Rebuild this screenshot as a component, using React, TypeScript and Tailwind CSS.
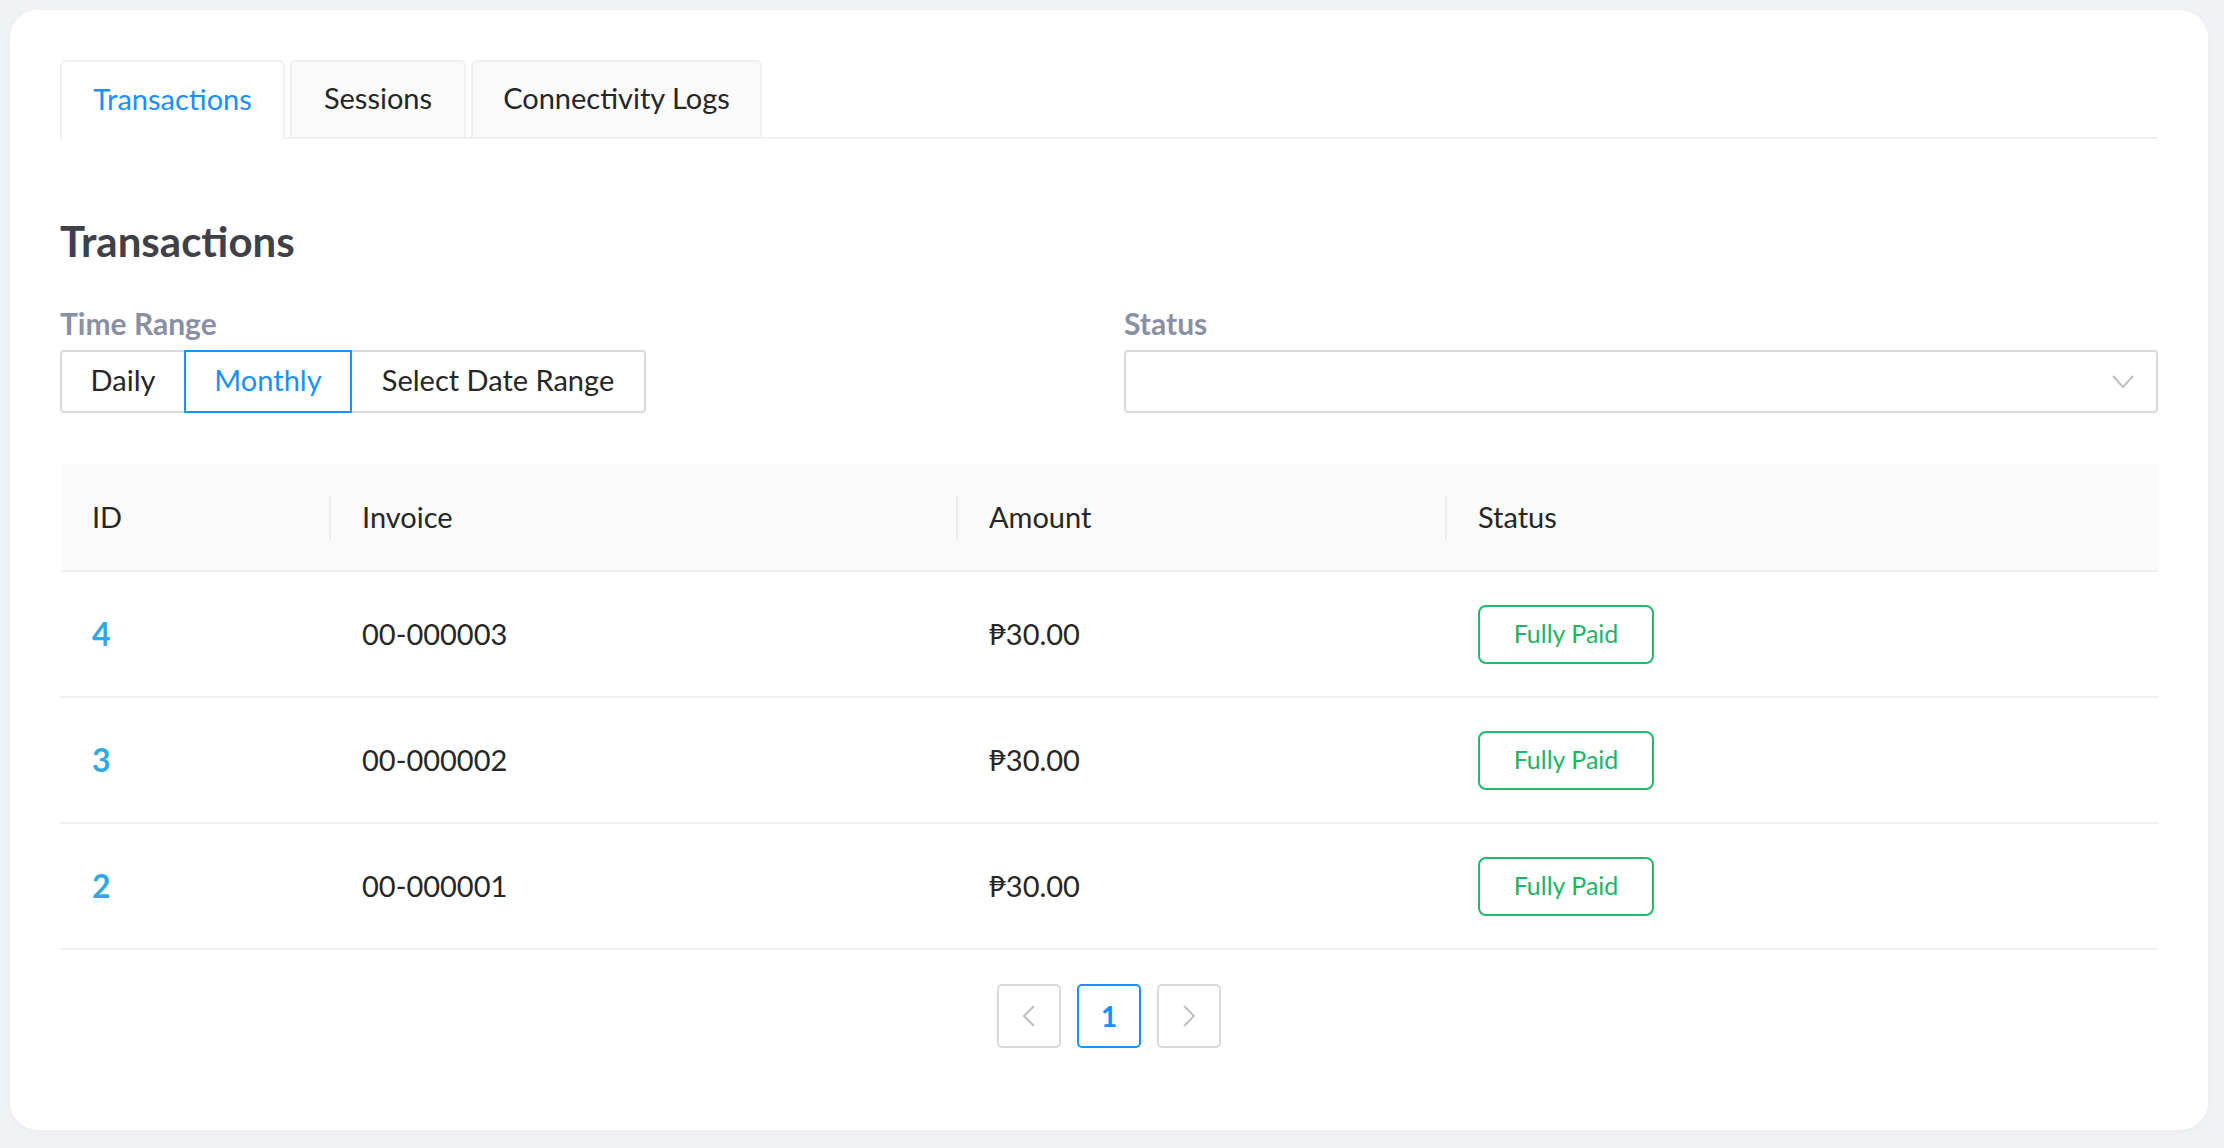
import React, { useState } from "react";

const rows = [
  { id: 4, invoice: "00-000003", amount: "₱30.00" },
  { id: 3, invoice: "00-000002", amount: "₱30.00" },
  { id: 2, invoice: "00-000001", amount: "₱30.00" },
];

const tabs = [
  { name: "Transactions", width: "w-[225px]" },
  { name: "Sessions", width: "w-[176px]" },
  { name: "Connectivity Logs", width: "w-[291px]" },
];

const ranges = [
  { name: "Daily", width: "w-[126px]" },
  { name: "Monthly", width: "w-[168px]" },
  { name: "Select Date Range", width: "w-[296px]" },
];

function HeaderCell({ label, first }: { label: string; first?: boolean }) {
  return (
    <div className="flex items-center h-full">
      {first ? (
        <span className="pl-[32px]">{label}</span>
      ) : (
        <>
          <div className="w-[2px] h-[44px] bg-[#ececec]" />
          <span className="pl-[31px]">{label}</span>
        </>
      )}
    </div>
  );
}

export default function App() {
  const [activeTab, setActiveTab] = useState("Transactions");
  const [range, setRange] = useState("Monthly");

  return (
    <div className="min-h-[1148px] bg-[#f0f2f5] pt-[10px] pl-[10px] font-['Lato','Noto_Sans',sans-serif]">
      <div className="w-[2198px] h-[1120px] bg-white rounded-[28px] shadow-[0_2px_10px_rgba(0,0,0,0.03)] px-[50px] pt-[50px]">
        {/* tabs */}
        <div className="flex items-end gap-[5px] border-b-2 border-[#f0f0f0] h-[79px]">
          {tabs.map((t) => (
            <button
              key={t.name}
              onClick={() => setActiveTab(t.name)}
              className={`${t.width} flex items-center justify-center border-2 border-b-0 border-[#f0f0f0] rounded-t-[6px] text-[29px] pb-[4px] ${
                activeTab === t.name
                  ? "bg-white text-[#1890ff] h-[79px] -mb-[2px]"
                  : "bg-[#fafafa] text-[#262626] h-[77px]"
              }`}
            >
              {t.name}
            </button>
          ))}
        </div>

        <h2 className="mt-[78px] text-[42px] leading-[48px] font-bold text-[#404049]">Transactions</h2>

        {/* filters */}
        <div className="grid grid-cols-2 gap-[30px] mt-[40px]">
          <div>
            <p className="text-[30px] leading-[36px] font-bold text-[#8a90a3]">Time Range</p>
            <div className="flex mt-[9px]">
              {ranges.map((r, i) => (
                <button
                  key={r.name}
                  onClick={() => setRange(r.name)}
                  className={`${r.width} h-[63px] text-[29px] pb-[3px] border-2 flex items-center justify-center ${
                    i === 0 ? "rounded-l-[4px]" : ""
                  } ${i === ranges.length - 1 ? "rounded-r-[4px]" : ""} ${i > 0 ? "-ml-[2px]" : ""} ${
                    range === r.name
                      ? "border-[#1890ff] text-[#1890ff] relative z-10"
                      : "border-[#d9d9d9] text-[#262626]"
                  }`}
                >
                  {r.name}
                </button>
              ))}
            </div>
          </div>
          <div>
            <p className="text-[30px] leading-[36px] font-bold text-[#8a90a3]">Status</p>
            <div className="mt-[9px] h-[63px] border-2 border-[#d9d9d9] rounded-[4px] flex items-center justify-end pr-[22px]">
              <svg width="22" height="14" viewBox="0 0 22 14" fill="none">
                <polyline points="1,1 11,12 21,1" stroke="#bfbfbf" strokeWidth="2" />
              </svg>
            </div>
          </div>
        </div>

        {/* table */}
        <div className="mt-[51px] text-[29px] text-[#262626]">
          <div className="grid grid-cols-[269px_627px_489px_1fr] h-[108px] bg-[#fafafa] border-b-2 border-[#f0f0f0]">
            <HeaderCell label="ID" first />
            <HeaderCell label="Invoice" />
            <HeaderCell label="Amount" />
            <HeaderCell label="Status" />
          </div>
          {rows.map((r) => (
            <div key={r.id} className="grid grid-cols-[269px_627px_489px_1fr] h-[126px] border-b-2 border-[#f0f0f0] items-center">
              <div className="pl-[32px] text-[32px] font-bold text-[#2fa9e1]">{r.id}</div>
              <div className="pl-[33px]">{r.invoice}</div>
              <div className="pl-[33px]">{r.amount}</div>
              <div className="pl-[33px]">
                <span className="inline-flex items-center justify-center w-[176px] h-[59px] border-2 border-[#23b86a] rounded-[8px] text-[25px] text-[#1fb463]">
                  Fully Paid
                </span>
              </div>
            </div>
          ))}
        </div>

        {/* pagination */}
        <div className="flex justify-center gap-[16px] mt-[34px]">
          <button className="w-[64px] h-[64px] border-2 border-[#d9d9d9] rounded-[5px] flex items-center justify-center">
            <svg width="14" height="22" viewBox="0 0 14 22" fill="none">
              <polyline points="12,1 2,11 12,21" stroke="#bfbfbf" strokeWidth="2" />
            </svg>
          </button>
          <button className="w-[64px] h-[64px] border-2 border-[#1890ff] rounded-[5px] flex items-center justify-center text-[28px] font-bold text-[#1890ff]">
            1
          </button>
          <button className="w-[64px] h-[64px] border-2 border-[#d9d9d9] rounded-[5px] flex items-center justify-center">
            <svg width="14" height="22" viewBox="0 0 14 22" fill="none">
              <polyline points="2,1 12,11 2,21" stroke="#bfbfbf" strokeWidth="2" />
            </svg>
          </button>
        </div>
      </div>
    </div>
  );
}
